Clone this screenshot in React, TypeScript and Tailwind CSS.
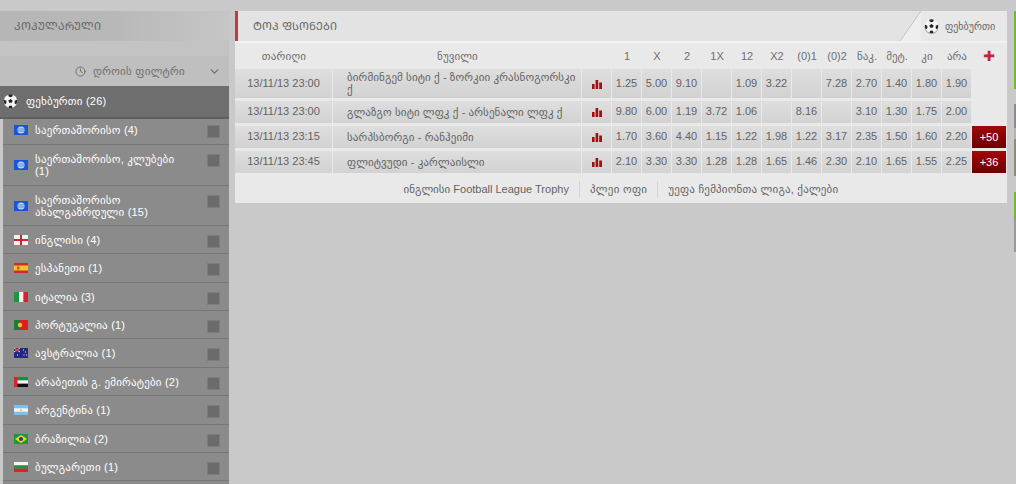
import React from 'react';
import { Clock, ChevronDown } from 'lucide-react';

const Ball = ({ size }: { size: number }) => (
  <svg width={size} height={size} viewBox="0 0 20 20" className="shrink-0">
    <circle cx="10" cy="11" r="9" fill="#666" opacity="0.6" />
    <circle cx="10" cy="9.5" r="9" fill="#f6f6f6" />
    <path d="M10 6.6l2.8 2-1.1 3.2H8.3L7.2 8.6z" fill="#222" />
    <path d="M7 1a9 9 0 0 1 6 0l-.6 2.2L10 4.4 7.6 3.2z" fill="#222" />
    <path d="M1.2 7.6A9 9 0 0 0 2.4 14l1.9-1.4.2-3.6z" fill="#222" />
    <path d="M18.8 7.6A9 9 0 0 1 17.6 14l-1.9-1.4-.2-3.6z" fill="#222" />
    <path d="M7.4 18.2a9 9 0 0 0 5.2 0l-.8-2.4H8.2z" fill="#222" />
  </svg>
);

const Flag = ({ code }: { code: string }) => {
  const art: Record<string, React.ReactNode> = {
    intl: (
      <>
        <rect width="14" height="10" fill="#1a55d8" />
        <circle cx="7" cy="5" r="3.6" fill="#b9d4ee" />
        <path d="M3.6 4h6.8M3.6 6h6.8" stroke="#3f6fc0" strokeWidth="0.7" />
      </>
    ),
    en: (
      <>
        <rect width="14" height="10" fill="#f2f2f2" />
        <path d="M6 0h2v10H6zM0 4h14v2H0z" fill="#d3222c" />
      </>
    ),
    es: (
      <>
        <rect width="14" height="10" fill="#d4282c" />
        <rect y="2.5" width="14" height="5" fill="#f3c425" />
        <rect x="3" y="3.5" width="2.5" height="3" fill="#b5622a" />
      </>
    ),
    it: (
      <>
        <rect width="5" height="10" fill="#1f9440" />
        <rect x="5" width="4.5" height="10" fill="#f4f4f4" />
        <rect x="9.5" width="4.5" height="10" fill="#d8232f" />
      </>
    ),
    pt: (
      <>
        <rect width="6" height="10" fill="#1e7a3a" />
        <rect x="6" width="8" height="10" fill="#dc2020" />
        <circle cx="6" cy="5" r="2.2" fill="#e8c33a" />
      </>
    ),
    au: (
      <>
        <rect width="14" height="10" fill="#23277e" />
        <path d="M0 0l6 4M6 0L0 4" stroke="#e8e8e8" strokeWidth="0.9" />
        <path d="M3 0v4M0 2h6" stroke="#d8232f" strokeWidth="0.9" />
        <path d="M9 2h1M11 4h1M9.5 7h1M12 7h1M3 7h1" stroke="#fff" strokeWidth="1" />
      </>
    ),
    ae: (
      <>
        <rect width="14" height="3.4" fill="#1e8a40" />
        <rect y="3.4" width="14" height="3.3" fill="#f4f4f4" />
        <rect y="6.7" width="14" height="3.3" fill="#111" />
        <rect width="3.5" height="10" fill="#d8232f" />
      </>
    ),
    ar: (
      <>
        <rect width="14" height="10" fill="#7cc0ec" />
        <rect y="3.3" width="14" height="3.4" fill="#f4f4f4" />
        <circle cx="7" cy="5" r="1" fill="#e8c33a" />
      </>
    ),
    br: (
      <>
        <rect width="14" height="10" fill="#169b3c" />
        <path d="M7 1l6 4-6 4-6-4z" fill="#f2d32b" />
        <circle cx="7" cy="5" r="2.1" fill="#23398a" />
      </>
    ),
    bg: (
      <>
        <rect width="14" height="3.4" fill="#f4f4f4" />
        <rect y="3.4" width="14" height="3.3" fill="#1f9440" />
        <rect y="6.7" width="14" height="3.3" fill="#d8232f" />
      </>
    ),
  };
  return (
    <svg width="14" height="10" viewBox="0 0 14 10" className="shrink-0">
      {art[code]}
    </svg>
  );
};

const BarsIcon = () => (
  <svg width="10" height="9" viewBox="0 0 10 9">
    <path d="M0 4h2.6v5H0zM3.6 0h2.6v9H3.6zM7.2 2.5H10V9H7.2z" fill="#a01010" />
  </svg>
);

const countries = [
  { code: 'intl', name: 'საერთაშორისო (4)', h: 'h-[26px]', pb: 'pb-[3px]', mt: 'mt-[6px]' },
  { code: 'intl', name: 'საერთაშორისო, კლუბები (1)', h: 'h-[41px]', pb: '', mt: 'mt-[9px]' },
  { code: 'intl', name: 'საერთაშორისო ახალგაზრდული (15)', h: 'h-[40px]', pb: '', mt: 'mt-[9px]' },
  { code: 'en', name: 'ინგლისი (4)', h: 'h-[28px]', pb: '', mt: 'mt-[9px]' },
  { code: 'es', name: 'ესპანეთი (1)', h: 'h-[29px]', pb: '', mt: 'mt-[9px]' },
  { code: 'it', name: 'იტალია (3)', h: 'h-[28px]', pb: '', mt: 'mt-[9px]' },
  { code: 'pt', name: 'პორტუგალია (1)', h: 'h-[28px]', pb: '', mt: 'mt-[9px]' },
  { code: 'au', name: 'ავსტრალია (1)', h: 'h-[29px]', pb: '', mt: 'mt-[9px]' },
  { code: 'ae', name: 'არაბეთის გ. ემირატები (2)', h: 'h-[28px]', pb: '', mt: 'mt-[9px]' },
  { code: 'ar', name: 'არგენტინა (1)', h: 'h-[29px]', pb: '', mt: 'mt-[9px]' },
  { code: 'br', name: 'ბრაზილია (2)', h: 'h-[28px]', pb: '', mt: 'mt-[9px]' },
  { code: 'bg', name: 'ბულგარეთი (1)', h: 'h-[28px]', pb: '', mt: 'mt-[9px]' },
];

const oddsHead = ['1', 'X', '2', '1X', '12', 'X2', '(0)1', '(0)2', 'ნაკ.', 'მეტ.', 'კი', 'არა'];

const matches = [
  {
    time: '13/11/13 23:00',
    name: 'ბირმინგემ სიტი ქ - ზორკიი კრასნოგორსკი ქ',
    odds: ['1.25', '5.00', '9.10', '', '1.09', '3.22', '', '7.28', '2.70', '1.40', '1.80', '1.90'],
    more: '',
    h: 'h-[29px]',
  },
  {
    time: '13/11/13 23:00',
    name: 'გლაზგო სიტი ლფკ ქ - არსენალი ლფკ ქ',
    odds: ['9.80', '6.00', '1.19', '3.72', '1.06', '', '8.16', '', '3.10', '1.30', '1.75', '2.00'],
    more: '',
    h: 'h-[22px]',
  },
  {
    time: '13/11/13 23:15',
    name: 'სარპსბორგი - რანჰეიმი',
    odds: ['1.70', '3.60', '4.40', '1.15', '1.22', '1.98', '1.22', '3.17', '2.35', '1.50', '1.60', '2.20'],
    more: '+50',
    h: 'h-[22px]',
  },
  {
    time: '13/11/13 23:45',
    name: 'ფლიტვუდი - კარლაისლი',
    odds: ['2.10', '3.30', '3.30', '1.28', '1.28', '1.65', '1.46', '2.30', '2.10', '1.65', '1.55', '2.25'],
    more: '+36',
    h: 'h-[22px]',
  },
];

const cell = 'bg-gradient-to-b from-[#dedede] to-[#d2d2d2] flex items-center pb-px';

export default function App() {
  return (
    <div className="w-[1016px] h-[484px] overflow-hidden bg-[#c9c9c9] flex pt-[11px] font-['Liberation_Sans','DejaVu_Sans',sans-serif] text-[11px] text-[#636363]">
      <aside className="w-[229px] shrink-0 flex flex-col">
        <div className="h-[30px] shrink-0 bg-gradient-to-r from-[#b6b6b6] via-[#b8b8b8] to-[#c6c6c6] flex items-center pl-[14px] text-[11px] text-[#666]">
          ᲙᲝᲞᲣᲚᲐᲠᲣᲚᲘ
        </div>
        <div className="h-[15px] shrink-0 bg-[#c3c3c3]" />
        <div className="h-[30px] shrink-0 bg-[#bfbfbf] flex items-center justify-end pr-[8px] text-[#6e6e6e]">
          <Clock size={11} strokeWidth={2} className="mr-[7px]" />
          <span className="mr-[23px] tracking-[0.25px]">დროის ფილტრი</span>
          <ChevronDown size={13} strokeWidth={2.5} />
        </div>
        <div className="h-[33px] shrink-0 bg-[#6e6e6e] border-b-[2px] border-[#5f5f5f] flex items-center pl-[3px] text-white">
          <Ball size={15} />
          <span className="ml-[8px] tracking-[0.2px]">ფეხბურთი (26)</span>
        </div>
        <ul className="ml-[3px] flex flex-col">
          {countries.map((c) => (
            <li
              key={c.name}
              className={`${c.h} ${c.pb} shrink-0 bg-[#8b8b8b] border-b border-[#777] flex items-center pl-[11px] pr-[9px] text-white`}
            >
              <Flag code={c.code} />
              <span className="ml-[7px] flex-1 leading-[12px] tracking-[0.2px]">
                <span className="block max-w-[152px]">{c.name}</span>
              </span>
              <span className={`${c.mt} self-start w-[13px] h-[13px] shrink-0 bg-[#6b6b6b] border border-[#7c7c7c]`} />
            </li>
          ))}
          <li className="h-[10px] shrink-0 bg-[#8b8b8b]" />
        </ul>
      </aside>

      <main className="w-[772px] h-[192px] ml-[6px] shrink-0 bg-[#e9e9e9] flex flex-col">
        <div className="h-[30px] shrink-0 flex items-stretch border-l-[3px] border-[#c23a3a] bg-[#e3e3e3]">
          <div className="flex-1 flex items-center pl-[15px] text-[11px] text-[#666]">ᲢᲝᲞ ᲤᲡᲝᲜᲔᲑᲘ</div>
          <div className="relative w-[87px] flex items-center pl-[3px] bg-[#e8e8e8] border-l border-[#f6f6f6] text-[10px] text-[#666]">
            <svg width="21" height="30" viewBox="0 0 21 30" className="absolute left-[-21px] top-0">
              <path d="M21 0L0 30h21z" fill="#eeeeee" />
              <path d="M21 0L0 30" stroke="#c2c2c2" strokeWidth="1" fill="none" />
            </svg>
            <Ball size={15} />
            <span className="ml-[6px]">ფეხბურთი</span>
          </div>
        </div>

        <div className="h-[28px] shrink-0 border-t-2 border-[#f2f2f2] flex items-center text-[#6e6e6e]">
          <span className="w-[98px] text-center tracking-[0.2px]">თარიღი</span>
          <span className="w-[249px] text-center tracking-[0.1px]">ნუვილი</span>
          <span className="w-[30px]" />
          {oddsHead.map((h) => (
            <span key={h} className="w-[30px] text-center">
              {h}
            </span>
          ))}
          <span className="w-[34px] text-center text-[#c2272d] text-[14px] font-bold leading-none">✚</span>
        </div>

        {matches.map((m) => (
          <div key={m.name} className={`${m.h} mb-[3px] shrink-0 flex`}>
            <div className={`${cell} w-[97px] mr-px justify-center`}>{m.time}</div>
            <div className={`${cell} w-[248px] mr-px pl-[14px] leading-[12px] tracking-[0.1px]`}>{m.name}</div>
            <div className={`${cell} w-[29px] mr-px justify-center pt-[2px]`}>
              <BarsIcon />
            </div>
            {m.odds.map((o, i) => (
              <div key={i} className={`${cell} w-[29px] mr-px justify-center`}>
                {o}
              </div>
            ))}
            {m.more && (
              <div className="w-[34px] bg-gradient-to-b from-[#a30808] to-[#6e0000] text-white flex items-center justify-center text-[11px]">
                {m.more}
              </div>
            )}
          </div>
        ))}

        <div className="flex-1 flex items-center justify-center text-[#636363]">
          <span className="pr-[10px] border-r border-[#d4d4d4] leading-[17px]">ინგლისი Football League Trophy</span>
          <span className="px-[10px] border-r border-[#d4d4d4] leading-[17px] tracking-[0.3px]">პლეი ოფი</span>
          <span className="pl-[10px] leading-[17px] tracking-[0.2px]">უეფა ჩემპიონთა ლიგა, ქალები</span>
        </div>
      </main>

      <div className="ml-[7px] w-[2px] shrink-0 flex flex-col">
        <div className="h-[78px] bg-[#76b82a]" />
        <div className="h-[15px]" />
        <div className="h-[24px] bg-[#8f8a92]" />
        <div className="h-[11px] bg-[#b5b5ad]" />
        <div className="h-[37px] bg-[#8c8c7c]" />
        <div className="h-[16px]" />
        <div className="h-[28px] bg-[#76b82a]" />
        <div className="h-[32px] bg-[#9a9a9a]" />
      </div>
    </div>
  );
}
